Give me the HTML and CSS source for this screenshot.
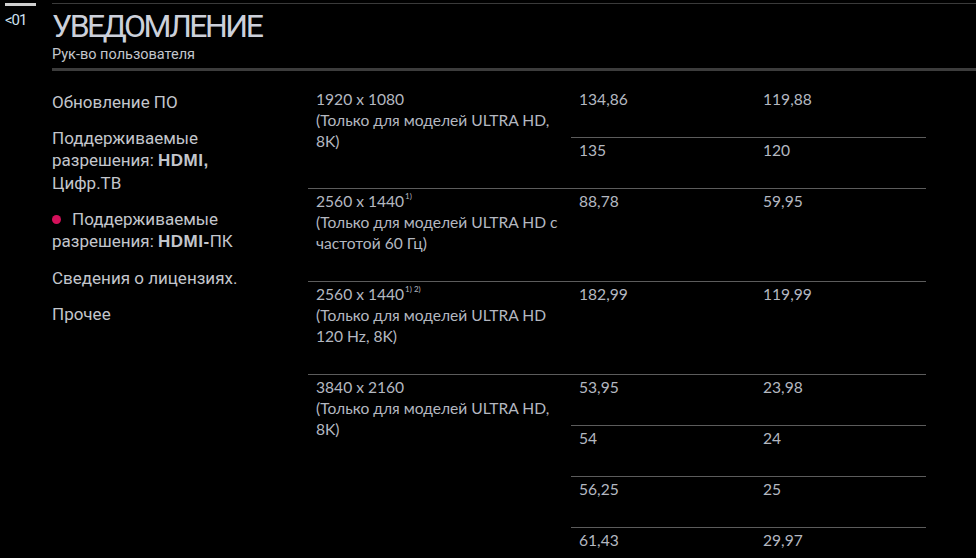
FILE: index.html
```html
<!DOCTYPE html>
<html lang="ru">

<head>
	<meta charset="UTF-8">
	<meta name="viewport" content="width=device-width, initial-scale=1.0">
	<title>Уведомление</title>
	<link rel="stylesheet" href="styles.css">
</head>

<body>
	<div class="page">
		<div class="rail">
			<div class="rail-bar"></div>
			<div class="rail-page">&lt;01</div>
		</div>

		<div class="main">
			<div class="header">
				<h1>УВЕДОМЛЕНИЕ</h1>
				<div class="subtitle">Рук-во пользователя</div>
			</div>

			<div class="content">
				<ul class="nav">
					<li>Обновление ПО</li>
					<li>Поддерживаемые разрешения: <span class="latin">HDMI,</span> Цифр.ТВ</li>
					<li class="active"><span class="dot"></span>Поддерживаемые разрешения: <span class="latin">HDMI-</span>ПК</li>
					<li>Сведения о лицензиях.</li>
					<li>Прочее</li>
				</ul>

				<table class="res-table">
					<tbody>
						<tr class="first">
							<td class="res" rowspan="2">1920 x 1080<br>(Только для моделей ULTRA HD, 8K)</td>
							<td class="hz">134,86</td>
							<td class="fps">119,88</td>
						</tr>
						<tr>
							<td class="hz">135</td>
							<td class="fps">120</td>
						</tr>
						<tr>
							<td class="res">2560 x 1440<sup>1)</sup><br>(Только для моделей ULTRA HD с частотой 60 Гц)</td>
							<td class="hz">88,78</td>
							<td class="fps">59,95</td>
						</tr>
						<tr>
							<td class="res">2560 x 1440<sup>1) 2)</sup><br>(Только для моделей ULTRA HD 120 Hz, 8K)</td>
							<td class="hz">182,99</td>
							<td class="fps">119,99</td>
						</tr>
						<tr>
							<td class="res" rowspan="4">3840 x 2160<br>(Только для моделей ULTRA HD, 8K)</td>
							<td class="hz">53,95</td>
							<td class="fps">23,98</td>
						</tr>
						<tr>
							<td class="hz">54</td>
							<td class="fps">24</td>
						</tr>
						<tr>
							<td class="hz">56,25</td>
							<td class="fps">25</td>
						</tr>
						<tr>
							<td class="hz">61,43</td>
							<td class="fps">29,97</td>
						</tr>
					</tbody>
				</table>
			</div>
		</div>
	</div>
</body>

</html>
```

FILE: styles.css
```css
html,
body {
	margin: 0;
	background-color: #000;
	overflow: hidden;
}

body {
	font-family: Roboto, "Liberation Sans", sans-serif;
	color: #c3c6cc;
}

.page {
	display: flex;
	height: 558px;
}

/* Left rail with page counter */

.rail {
	width: 52px;
	flex-shrink: 0;
	padding-top: 3px;
	box-sizing: border-box;
}

.rail-bar {
	width: 31px;
	height: 3px;
	margin-left: 5px;
	background-color: #cfcfcf;
}

.rail-page {
	margin: 6px 0 0 5px;
	font-size: 15px;
	line-height: 16px;
	letter-spacing: -1px;
	color: #cfe0f2;
}

/* Header */

.main {
	flex: 1;
	min-width: 0;
}

.header {
	margin-top: 3px;
	border-top: 1px solid #3a3a3a;
	border-bottom: 3px solid #3c3c3c;
	padding-bottom: 5px;
}

.header h1 {
	margin: 0;
	padding-top: 4px;
	font-size: 32px;
	font-weight: 400;
	line-height: 36px;
	letter-spacing: -2.5px;
	color: #ccd0da;
}

.header .subtitle {
	margin-top: 3px;
	font-size: 14.5px;
	line-height: 16px;
	color: #c3c6cc;
}

/* Content */

.content {
	display: flex;
	margin-top: 15px;
}

.nav {
	list-style: none;
	margin: 0;
	padding: 5px 0 0;
	width: 256px;
	flex-shrink: 0;
}

.nav li {
	width: 200px;
	font-size: 17px;
	line-height: 22px;
	margin-bottom: 14px;
}

.nav .latin {
	font-family: "Liberation Sans", sans-serif;
	font-weight: bold;
	font-size: 17px;
	letter-spacing: 0.5px;
}

.nav .dot {
	display: inline-block;
	width: 9px;
	height: 9px;
	border-radius: 50%;
	background-color: #d4105a;
	margin-right: 11px;
	vertical-align: 1px;
}

/* Resolution table */

.res-table {
	width: 618px;
	border-collapse: separate;
	border-spacing: 0;
	font-family: Lato, "Open Sans", sans-serif;
	font-size: 15.6px;
	line-height: 21px;
	color: #b4b8c0;
}

.res-table td {
	vertical-align: top;
	padding: 2px 8px 27px;
	border-top: 1px solid #5c5c5c;
}

.res-table .first td {
	border-top-color: transparent;
}

.res-table .res {
	width: 247px;
}

.res-table .hz {
	width: 168px;
}

.res-table sup {
	font-size: 8px;
	line-height: 0;
	vertical-align: 8px;
	margin-left: 1px;
}
```
